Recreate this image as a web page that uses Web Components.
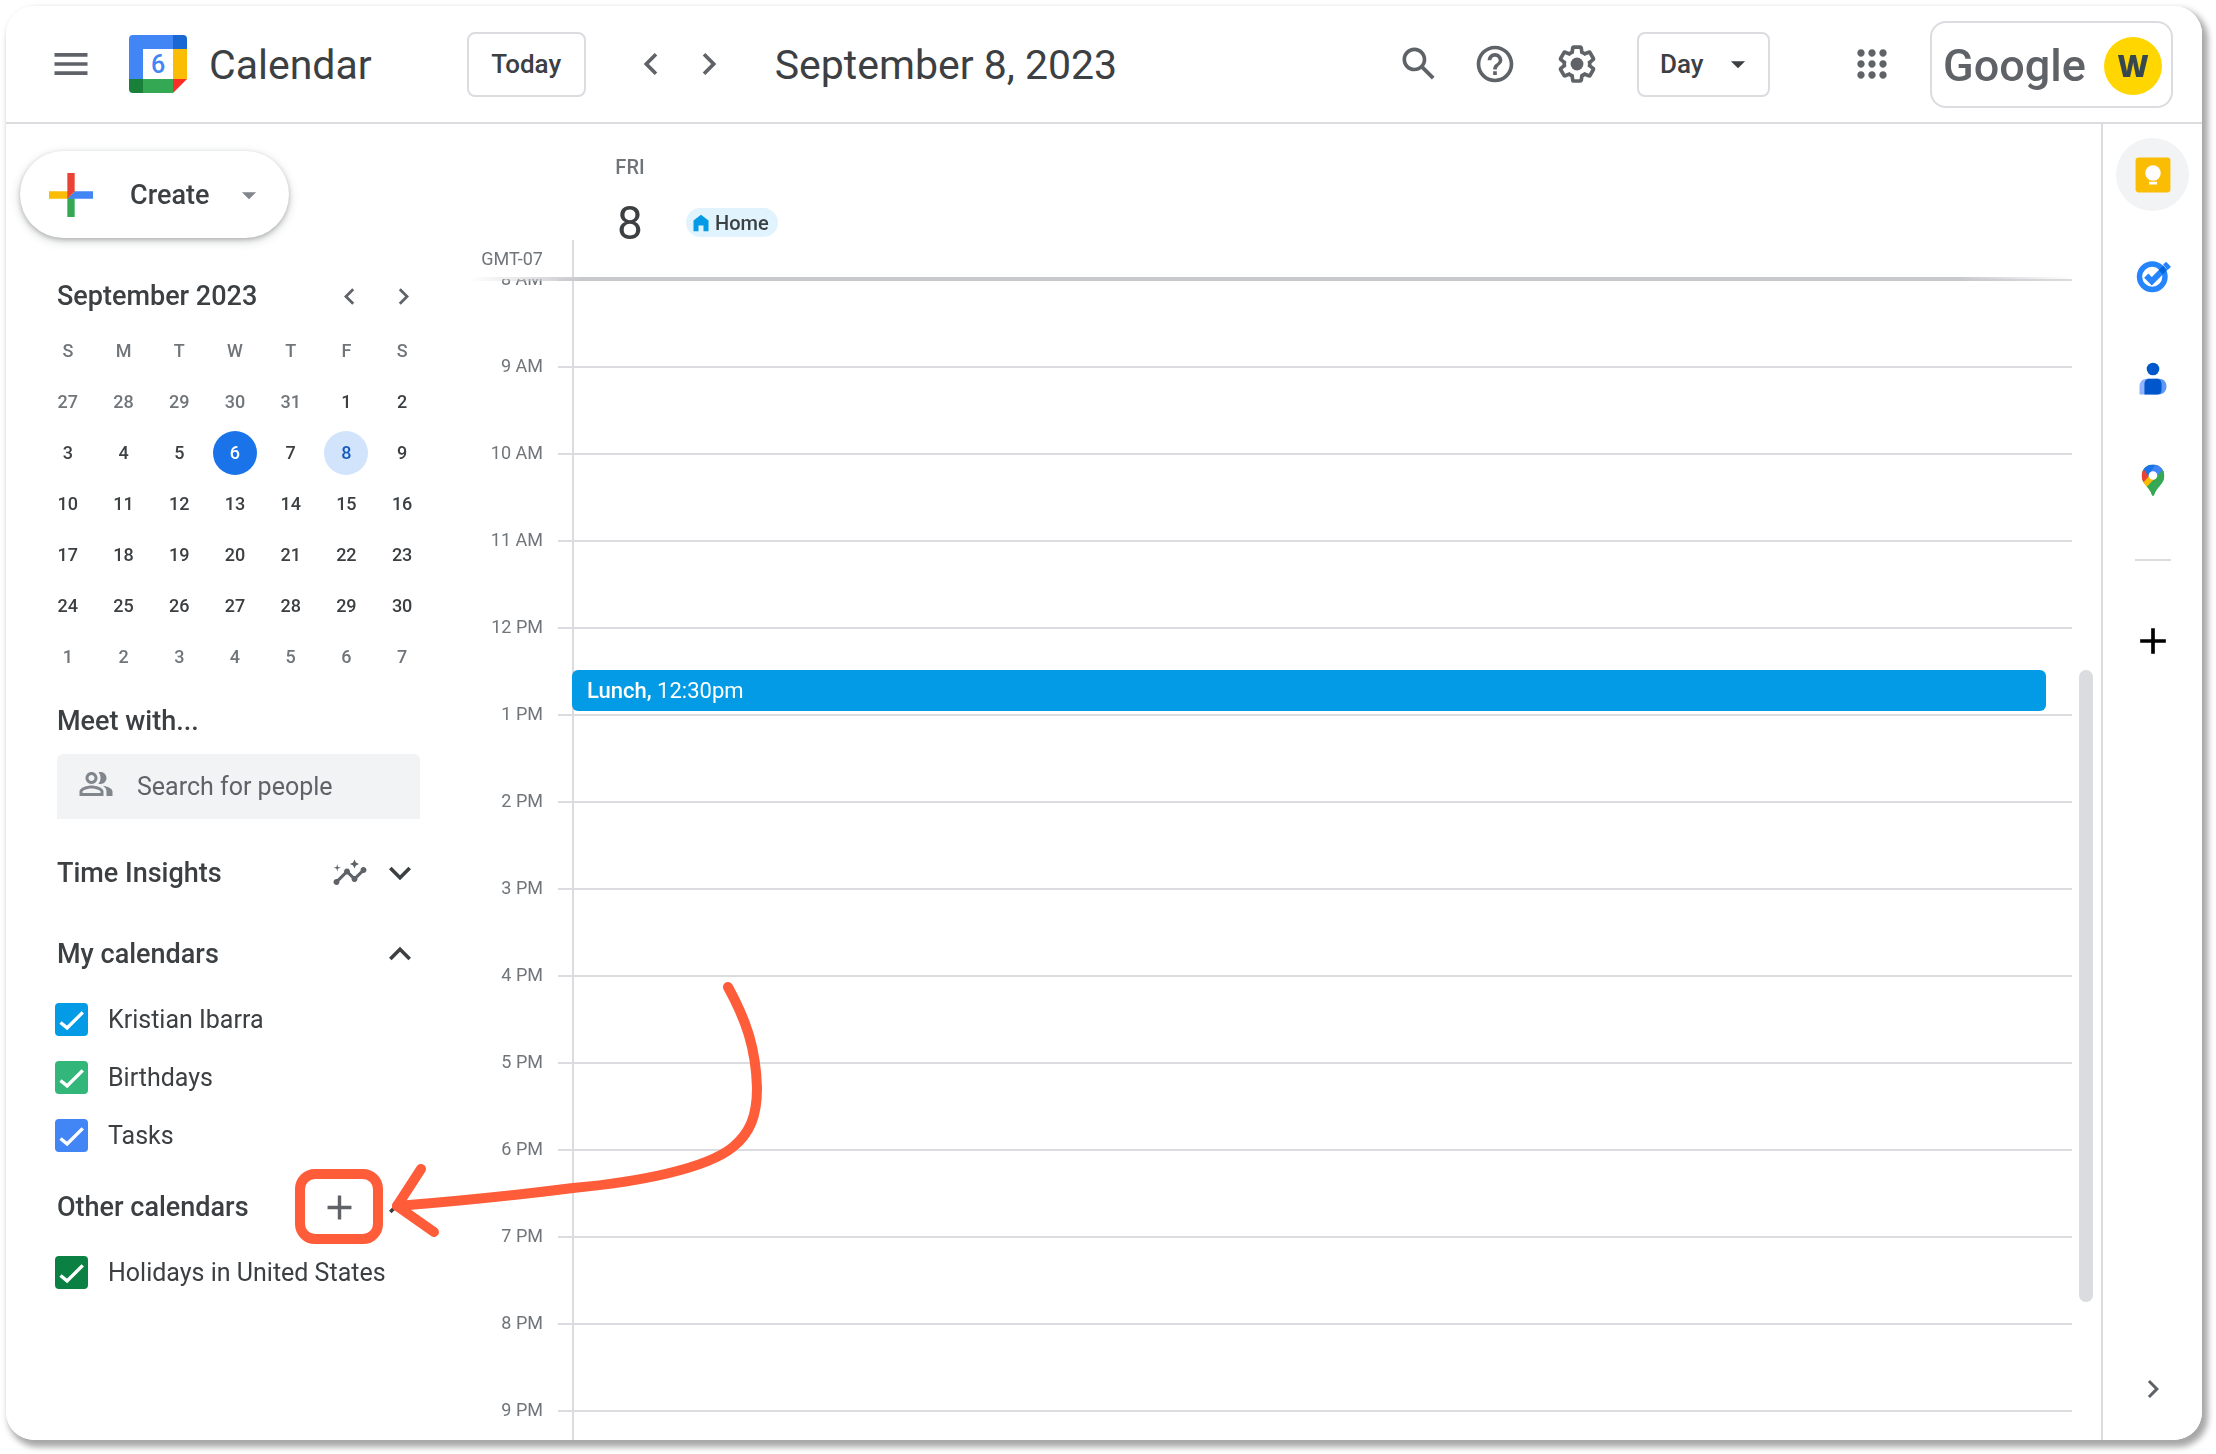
<!DOCTYPE html>
<html lang="en">
<head>
<meta charset="utf-8">
<title>Calendar - September 8, 2023</title>
<style>
  body {
    margin: 6px 14px 14px 6px;
    background: #fff;
    color: #3c4043;
    font-family: Roboto, "Liberation Sans", sans-serif;
  }
</style>
</head>
<body>

<cal-app>
  <cal-topbar slot="top"></cal-topbar>

  <cal-sidebar slot="side">
    <create-button>Create</create-button>
    <mini-month></mini-month>
    <people-search>Meet with...</people-search>
    <cal-section heading="Time Insights" arrow="down">
      <cal-icon slot="tool" name="insights" size="36"></cal-icon>
    </cal-section>
    <cal-section heading="My calendars" arrow="up">
      <cal-check color="#039be5">Kristian Ibarra</cal-check>
      <cal-check color="#33b679">Birthdays</cal-check>
      <cal-check color="#4285f4">Tasks</cal-check>
    </cal-section>
    <cal-section heading="Other calendars" arrow="up">
      <add-button slot="tool"></add-button>
      <cal-check color="#0b8043">Holidays in United States</cal-check>
    </cal-section>
  </cal-sidebar>

  <day-view slot="main">
    <day-event slot="12pm"><b>Lunch,</b> 12:30pm</day-event>
  </day-view>

  <side-rail slot="rail"></side-rail>
</cal-app>

<script>
const ICONS = {
  menu: '<path d="M3 18h18v-2H3v2zm0-5h18v-2H3v2zm0-7v2h18V6H3z"/>',
  left: '<path d="M15.41 7.41L14 6l-6 6 6 6 1.41-1.41L10.83 12z"/>',
  right: '<path d="M10 6L8.59 7.41 13.17 12l-4.58 4.59L10 18l6-6z"/>',
  up: '<path d="M12 8l-6 6 1.41 1.41L12 10.83l4.59 4.58L18 14z"/>',
  down: '<path d="M16.59 8.59L12 13.17 7.41 8.59 6 10l6 6 6-6z"/>',
  drop: '<path d="M7 10l5 5 5-5z"/>',
  plus: '<path d="M19 13h-6v6h-2v-6H5v-2h6V5h2v6h6v2z"/>',
  search: '<path d="M20.49 19l-5.73-5.73C15.53 12.2 16 10.91 16 9.5 16 5.91 13.09 3 9.5 3S3 5.91 3 9.5 5.91 16 9.5 16c1.41 0 2.7-.47 3.77-1.24L19 20.49 20.49 19zM5 9.5C5 7.01 7.01 5 9.5 5S14 7.01 14 9.5 11.99 14 9.5 14 5 11.99 5 9.5z"/>',
  help: '<path d="M11 18h2v-2h-2v2zm1-16C6.48 2 2 6.48 2 12s4.48 10 10 10 10-4.48 10-10S17.52 2 12 2zm0 18c-4.41 0-8-3.59-8-8s3.59-8 8-8 8 3.59 8 8-3.59 8-8 8zm0-14c-2.21 0-4 1.79-4 4h2c0-1.1.9-2 2-2s2 .9 2 2c0 2-3 1.75-3 5h2c0-2.25 3-2.5 3-5 0-2.21-1.79-4-4-4z"/>',
  settings: '<path d="M13.85 22.25h-3.7c-.74 0-1.36-.54-1.45-1.27l-.27-1.89c-.27-.14-.53-.29-.79-.46l-1.8.72c-.7.26-1.47-.03-1.81-.65L2.2 15.53c-.35-.66-.2-1.44.36-1.88l1.53-1.19c-.01-.15-.02-.3-.02-.46 0-.15.01-.31.02-.46l-1.52-1.19c-.59-.45-.74-1.26-.37-1.88l1.85-3.19c.34-.62 1.11-.9 1.79-.63l1.81.73c.26-.17.52-.32.78-.46l.27-1.91c.09-.7.71-1.25 1.44-1.25h3.7c.74 0 1.36.54 1.45 1.27l.27 1.89c.27.14.53.29.79.46l1.8-.72c.71-.26 1.48.03 1.82.65l1.84 3.18c.36.66.2 1.44-.36 1.88l-1.52 1.19c.01.15.02.3.02.46s-.01.31-.02.46l1.52 1.19c.56.45.72 1.23.37 1.86l-1.86 3.22c-.34.62-1.11.9-1.8.63l-1.8-.72c-.26.17-.52.32-.78.46l-.27 1.91c-.1.68-.72 1.22-1.46 1.22zm-3.23-2h2.76l.37-2.55.53-.22c.44-.18.88-.44 1.34-.78l.45-.34 2.38.96 1.38-2.4-2.03-1.58.07-.56c.03-.26.06-.51.06-.78s-.03-.53-.06-.78l-.07-.56 2.03-1.58-1.39-2.4-2.39.96-.45-.35c-.42-.32-.87-.58-1.33-.77l-.52-.22-.37-2.55h-2.76l-.37 2.55-.53.21c-.44.19-.88.44-1.34.79l-.45.33-2.38-.95-1.39 2.39 2.03 1.58-.07.56a7 7 0 0 0-.06.79c0 .26.02.53.06.78l.07.56-2.03 1.58 1.38 2.4 2.39-.96.45.35c.43.33.86.58 1.33.77l.53.22.38 2.55z"/><circle cx="12" cy="12" r="3.5"/>',
  apps: '<path d="M6 8c1.1 0 2-.9 2-2s-.9-2-2-2-2 .9-2 2 .9 2 2 2zm6 12c1.1 0 2-.9 2-2s-.9-2-2-2-2 .9-2 2 .9 2 2 2zm-6 0c1.1 0 2-.9 2-2s-.9-2-2-2-2 .9-2 2 .9 2 2 2zm0-6c1.1 0 2-.9 2-2s-.9-2-2-2-2 .9-2 2 .9 2 2 2zm6 0c1.1 0 2-.9 2-2s-.9-2-2-2-2 .9-2 2 .9 2 2 2zm4-8c0 1.1.9 2 2 2s2-.9 2-2-.9-2-2-2-2 .9-2 2zm-4 2c1.1 0 2-.9 2-2s-.9-2-2-2-2 .9-2 2 .9 2 2 2zm6 6c1.1 0 2-.9 2-2s-.9-2-2-2-2 .9-2 2 .9 2 2 2zm0 6c1.1 0 2-.9 2-2s-.9-2-2-2-2 .9-2 2 .9 2 2 2z"/>',
  people: '<path d="M16.67 13.13C18.04 14.06 19 15.32 19 17v3h4v-3c0-2.18-3.57-3.47-6.33-3.87zM15 12c2.21 0 4-1.79 4-4s-1.79-4-4-4c-.47 0-.91.1-1.33.24C14.5 5.27 15 6.58 15 8s-.5 2.73-1.33 3.76c.42.14.86.24 1.33.24zM9 12c2.21 0 4-1.79 4-4s-1.79-4-4-4-4 1.79-4 4 1.79 4 4 4zm0-6c1.1 0 2 .9 2 2s-.9 2-2 2-2-.9-2-2 .9-2 2-2zM9 13c-2.67 0-8 1.34-8 4v3h16v-3c0-2.66-5.33-4-8-4zm6 5H3v-.99C3.2 16.29 6.3 15 9 15s5.8 1.29 6 2v1z"/>',
  insights: '<path d="M21 8c-1.45 0-2.26 1.44-1.93 2.51l-3.55 3.56c-.3-.09-.74-.09-1.04 0l-2.55-2.55C12.27 10.45 11.46 9 10 9c-1.45 0-2.27 1.44-1.93 2.52l-4.56 4.55C2.44 15.74 1 16.55 1 18c0 1.1.9 2 2 2 1.45 0 2.26-1.44 1.93-2.51l4.55-4.56c.3.09.74.09 1.04 0l2.55 2.55C12.73 16.55 13.54 18 15 18c1.45 0 2.27-1.44 1.93-2.52l3.56-3.55c1.07.33 2.51-.48 2.51-1.93 0-1.1-.9-2-2-2zM15 9l.94-2.07L18 6l-2.06-.93L15 3l-.92 2.07L12 6l2.08.93zM3.5 11L4 9l2-.5L4 8l-.5-2L3 8l-2 .5L3 9z"/>',
  home: '<path d="M12 2L3 9v13h6v-7h6v7h6V9z"/>',
  tick: '<path d="M4 14.2l4.8 3.9L20.2 6.8" fill="none" stroke="#fff" stroke-width="2.5"/>',
  keep: '<rect x="1" y="1" width="22" height="22" rx="2" fill="#fbbc04"/><circle cx="12" cy="10.800" r="4.900" fill="#fff"/><path fill="#fff" d="M9.500 13.500h5v1.600h-5zM9.500 16.300h5v1.700h-5z"/>',
  tasks: '<circle cx="11.500" cy="12.500" r="8.500" fill="none" stroke="#2684fc" stroke-width="3.600"/><path d="M7.500 11.800l3.700 3.700L20.300 6.400" fill="none" stroke="#2684fc" stroke-width="4"/><path d="M15.800 8l2.900-2.900 2.200 3.500-2.400 2.300z" fill="#0066da"/><path d="M19.400 4.400l1.300-1.200 2.600 2.600-1.500 1.500z" fill="#2684fc" stroke="#2684fc" stroke-linejoin="round"/>',
  contacts: '<circle cx="12" cy="6" r="4.200" fill="#0057cc"/><path fill="#91b4fc" d="M8 12.500h4V23H3v-5.300C3 14.500 5 12.500 8 12.500z"/><path fill="#5e97f6" d="M12 12.500h4c3 0 5 2 5 5s-2 5.500-5 5.500h-4z"/><path fill="#0057cc" d="M9.500 12.500h5c2 0 3.200 1.500 3.200 3.500v4c0 2-1.200 3-3.200 3H6.300v-7c0-2 1.200-3.500 3.200-3.500z"/>',
  maps: '<clipPath id="pin"><path d="M12 1c-4.600 0-8 3.500-8 7.900 0 3 1.300 4.900 3.200 7.200 2 2.400 3.300 3.900 4 6.300.3 1 1.300 1 1.600 0 .7-2.400 2-3.900 4-6.300C18.700 13.800 20 11.900 20 8.900 20 4.500 16.600 1 12 1z"/></clipPath><g clip-path="url(#pin)"><path fill="#34a853" d="M0 0h24v24H0z"/><path fill="#fbbc04" d="M2 12.500l5-6 8 5-8 8z"/><path fill="#ea4335" d="M2 2l3 1.500 6 5-5.500 6.500L2 13z"/><path fill="#1a73e8" d="M5 3.800V0h10.500L9 9.500z"/><path fill="#4285f4" d="M14.800 0L20 4v1.200L9.500 17 8.500 8.500z"/><path fill="#fbbc04" d="M5.400 13.500l5-5.700 3 3.700-6.200 6.300z"/><path fill="#34a853" d="M7.500 17L19.300 4.500 24 9 12 24z"/></g><circle cx="12" cy="8.900" r="3" fill="#fff"/>'
};

class CalIcon extends HTMLElement {
  constructor() {
    super();
    this.attachShadow({ mode: 'open' });
  }
  connectedCallback() {
    const size = this.getAttribute('size') || 44;
    this.shadowRoot.innerHTML = `
      <style>
        :host { display: block; flex: none; width: ${size}px; height: ${size}px; }
        svg { display: block; width: 100%; height: 100%; fill: currentColor; }
      </style>
      <svg viewBox="0 0 24 24" aria-hidden="true">${ICONS[this.getAttribute('name')]}</svg>
    `;
  }
}
customElements.define('cal-icon', CalIcon);

// Shared reset for the buttons inside each shadow root
const BUTTON = `
  button {
    font: inherit;
    color: inherit;
    background: none;
    border: 0;
    padding: 0;
    cursor: pointer;
  }
`;

class CalApp extends HTMLElement {
  constructor() {
    super();
    this.attachShadow({ mode: 'open' }).innerHTML = `
      <style>
        :host {
          display: flex;
          flex-direction: column;
          height: calc(100vh - 20px);
          overflow: hidden;
          border-radius: 28px;
          background: #fff;
        }
        .shade {
          position: fixed;
          inset: 6px 14px 14px 6px;
          z-index: -1;
          border-radius: 28px;
          box-shadow: 4px 5px 6px 2px rgba(0, 0, 0, 0.35);
        }
        .body {
          flex: 1;
          display: flex;
          min-height: 0;
        }
        ::slotted(day-view) { flex: 1; min-width: 0; }
      </style>
      <div class="shade"></div>
      <slot name="top"></slot>
      <div class="body">
        <slot name="side"></slot>
        <slot name="main"></slot>
        <slot name="rail"></slot>
      </div>
    `;
  }
}
customElements.define('cal-app', CalApp);

class CalTopbar extends HTMLElement {
  constructor() {
    super();
    this.attachShadow({ mode: 'open' }).innerHTML = `
      <style>
        ${BUTTON}
        :host {
          display: block;
          flex: none;
          border-bottom: 2px solid #dadce0;
        }
        header {
          display: flex;
          align-items: center;
          height: 116px;
          padding: 0 29px 0 43px;
          color: #5f6368;
        }
        .logo { width: 58px; height: 58px; margin: 0 22px 0 36px; }
        h1, h2 {
          margin: 2px 0 0;
          color: #3c4043;
          font-size: 41px;
          font-weight: 400;
          line-height: 48px;
          white-space: nowrap;
        }
        .today, select {
          box-sizing: border-box;
          height: 65px;
          border: 2px solid #dadce0;
          border-radius: 8px;
          background: #fff;
          color: #3c4043;
          font: 500 26px/32px Roboto, sans-serif;
        }
        .today { width: 119px; margin: 0 43px 0 95px; }
        .pager { display: flex; gap: 14px; margin-right: 44px; }
        .tools { display: flex; align-items: center; margin-left: auto; }
        .tools button { margin-right: 38px; }
        .tools button:first-child { margin-right: 32px; }
        .view { display: grid; align-items: center; margin-right: 80px; }
        .view > * { grid-area: 1 / 1; }
        .view cal-icon { justify-self: end; margin-right: 15px; pointer-events: none; color: #3c4043; }
        select { appearance: none; width: 133px; padding: 0 21px; }
        .tools .apps { margin-right: 36px; }
        .account {
          box-sizing: border-box;
          display: flex;
          align-items: center;
          justify-content: space-between;
          width: 243px;
          height: 87px;
          padding: 3px 9px 0 11px;
          border: 2px solid #dadce0;
          border-radius: 16px;
          text-decoration: none;
          color: #5f6368;
        }
        .brand { font-size: 45px; font-weight: 500; line-height: 56px; }
        .avatar {
          width: 58px;
          height: 58px;
          border-radius: 50%;
          background: #ffd600;
          color: #37474f;
          font: 800 30px/58px "Open Sans", sans-serif;
          text-align: center;
        }
      </style>
      <header>
        <button aria-label="Main menu"><cal-icon name="menu"></cal-icon></button>
        <svg class="logo" viewBox="0 0 58 58" aria-hidden="true">
          <path fill="#4285f4" d="M4 0h40v14H14v30H0V4a4 4 0 0 1 4-4z"/>
          <path fill="#1967d2" d="M44 0h10a4 4 0 0 1 4 4v10H44z"/>
          <path fill="#fbbc04" d="M44 14h14v30H44z"/>
          <path fill="#34a853" d="M14 44h30v14H14z"/>
          <path fill="#188038" d="M0 44h14v14H4a4 4 0 0 1-4-4z"/>
          <path fill="#fc2d25" d="M44 44h14L44 58z"/>
          <text x="29" y="38" text-anchor="middle" font-size="25" font-weight="500" fill="#4285f4">6</text>
        </svg>
        <h1>Calendar</h1>
        <button class="today">Today</button>
        <div class="pager">
          <button aria-label="Previous day"><cal-icon name="left"></cal-icon></button>
          <button aria-label="Next day"><cal-icon name="right"></cal-icon></button>
        </div>
        <h2>September 8, 2023</h2>
        <div class="tools">
          <button aria-label="Search"><cal-icon name="search"></cal-icon></button>
          <button aria-label="Support"><cal-icon name="help"></cal-icon></button>
          <button aria-label="Settings"><cal-icon name="settings"></cal-icon></button>
          <div class="view">
            <select aria-label="View"><option>Day</option><option>Week</option><option>Month</option></select>
            <cal-icon name="drop" size="34"></cal-icon>
          </div>
          <button class="apps" aria-label="Google apps"><cal-icon name="apps"></cal-icon></button>
          <a class="account" href="#account">
            <span class="brand">Google</span>
            <span class="avatar">W</span>
          </a>
        </div>
      </header>
    `;
  }
}
customElements.define('cal-topbar', CalTopbar);

class CalSidebar extends HTMLElement {
  constructor() {
    super();
    this.attachShadow({ mode: 'open' }).innerHTML = `
      <style>
        :host {
          box-sizing: border-box;
          display: block;
          flex: none;
          width: 464px;
          padding: 27px 38px 0 34px;
          position: relative;
          z-index: 2;
        }
      </style>
      <slot></slot>
    `;
  }
}
customElements.define('cal-sidebar', CalSidebar);

class CreateButton extends HTMLElement {
  constructor() {
    super();
    this.attachShadow({ mode: 'open' }).innerHTML = `
      <style>
        ${BUTTON}
        :host { display: block; margin-left: -20px; }
        button {
          display: flex;
          align-items: center;
          width: 269px;
          height: 87px;
          padding: 0 23px 0 18px;
          border-radius: 44px;
          background: #fff;
          box-shadow: 0 2px 4px rgba(60, 64, 67, 0.3), 0 3px 8px 2px rgba(60, 64, 67, 0.15);
          font-size: 27px;
          font-weight: 500;
        }
        svg { width: 66px; height: 66px; margin-right: 26px; }
        cal-icon { margin-left: auto; color: #80868b; }
      </style>
      <button>
        <svg viewBox="0 0 36 36" aria-hidden="true">
          <path fill="#34a853" d="M16 16v14h4V20z"/>
          <path fill="#4285f4" d="M30 16H20l-4 4h14z"/>
          <path fill="#fbbc04" d="M6 16v4h10l4-4z"/>
          <path fill="#ea4335" d="M20 16V6h-4v14z"/>
        </svg>
        <slot></slot>
        <cal-icon name="drop" size="34"></cal-icon>
      </button>
    `;
  }
}
customElements.define('create-button', CreateButton);

class MiniMonth extends HTMLElement {
  constructor() {
    super();
    const first = new Date(2023, 7, 27);
    let rows = '';
    for (let w = 0; w < 6; w++) {
      rows += '<tr>';
      for (let d = 0; d < 7; d++) {
        const day = new Date(first);
        day.setDate(first.getDate() + w * 7 + d);
        const n = day.getDate();
        let cls = '';
        if (day.getMonth() !== 8) cls = 'out';
        else if (n === 6) cls = 'today';
        else if (n === 8) cls = 'picked';
        rows += `<td><button class="${cls}">${n}</button></td>`;
      }
      rows += '</tr>';
    }
    this.attachShadow({ mode: 'open' }).innerHTML = `
      <style>
        ${BUTTON}
        :host { display: block; margin: 36px 2px 0 0; }
        .head {
          display: flex;
          align-items: center;
          height: 44px;
          padding: 0 10px 0 17px;
          margin-bottom: 7px;
        }
        h3 { margin: 0 auto 0 0; font-size: 27px; font-weight: 500; }
        .head button { margin-left: 21px; color: #5f6368; }
        table {
          width: 100%;
          table-layout: fixed;
          border-collapse: collapse;
          font-size: 18px;
          font-weight: 500;
          text-align: center;
        }
        th, td { height: 51px; padding: 0; }
        th { font-weight: 500; color: #70757a; }
        td button { width: 44px; height: 44px; border-radius: 50%; }
        .out { color: #70757a; }
        .today { background: #1a73e8; color: #fff; }
        .picked { background: #d2e3fc; color: #185abc; }
      </style>
      <div class="head">
        <h3>September 2023</h3>
        <button aria-label="Previous month"><cal-icon name="left" size="33"></cal-icon></button>
        <button aria-label="Next month"><cal-icon name="right" size="33"></cal-icon></button>
      </div>
      <table>
        <thead><tr>${[...'SMTWTFS'].map(d => `<th>${d}</th>`).join('')}</tr></thead>
        <tbody>${rows}</tbody>
      </table>
    `;
  }
}
customElements.define('mini-month', MiniMonth);

class PeopleSearch extends HTMLElement {
  constructor() {
    super();
    this.attachShadow({ mode: 'open' }).innerHTML = `
      <style>
        :host { display: block; margin: 23px 12px 0 17px; }
        label { display: block; font-size: 27px; font-weight: 500; line-height: 32px; }
        .box {
          display: flex;
          align-items: center;
          height: 65px;
          margin-top: 17px;
          padding-left: 21px;
          gap: 23px;
          border-radius: 6px 6px 0 0;
          background: #f1f3f4;
          color: #80868b;
        }
        input {
          flex: 1;
          min-width: 0;
          border: 0;
          padding: 0;
          outline: 0;
          background: none;
          font: 400 25px/32px Roboto, sans-serif;
        }
        input::placeholder { color: #5f6368; opacity: 1; }
        cal-icon { margin-bottom: 6px; }
      </style>
      <label for="who"><slot></slot></label>
      <div class="box">
        <cal-icon name="people" size="36"></cal-icon>
        <input id="who" type="text" placeholder="Search for people">
      </div>
    `;
  }
}
customElements.define('people-search', PeopleSearch);

class CalSection extends HTMLElement {
  constructor() {
    super();
    this.attachShadow({ mode: 'open' });
  }
  connectedCallback() {
    this.shadowRoot.innerHTML = `
      <style>
        ${BUTTON}
        :host { display: block; margin-top: 32px; }
        :host(:nth-of-type(2)) { margin-top: 37px; }
        :host(:nth-of-type(3)) { margin-top: 21px; }
        .head {
          display: flex;
          align-items: center;
          height: 44px;
          padding: 0 10px 0 17px;
        }
        h3 { margin: 0 auto 0 0; font-size: 27px; font-weight: 500; }
        .list { padding: 14px 0 0 15px; }
        :host([arrow="down"]) .list { padding: 0; }
        ::slotted(cal-icon) { margin-right: 10px; color: #5f6368; }
      </style>
      <div class="head">
        <h3>${this.getAttribute('heading')}</h3>
        <slot name="tool"></slot>
        <button aria-label="Toggle ${this.getAttribute('heading')}">
          <cal-icon name="${this.getAttribute('arrow')}"></cal-icon>
        </button>
      </div>
      <div class="list"><slot></slot></div>
    `;
  }
}
customElements.define('cal-section', CalSection);

class CalCheck extends HTMLElement {
  constructor() {
    super();
    this.attachShadow({ mode: 'open' });
  }
  connectedCallback() {
    this.shadowRoot.innerHTML = `
      <style>
        :host { display: block; }
        label {
          display: flex;
          align-items: center;
          gap: 20px;
          height: 58px;
          font-size: 25px;
          white-space: nowrap;
        }
        .box { display: grid; }
        .box > * { grid-area: 1 / 1; }
        input {
          appearance: none;
          width: 33px;
          height: 33px;
          margin: 0;
          border-radius: 4px;
          border: 3px solid ${this.getAttribute('color')};
        }
        input:checked { background: ${this.getAttribute('color')}; }
        cal-icon { pointer-events: none; }
      </style>
      <label>
        <span class="box">
          <input type="checkbox" checked>
          <cal-icon name="tick" size="33"></cal-icon>
        </span>
        <slot></slot>
      </label>
    `;
  }
}
customElements.define('cal-check', CalCheck);

// "Add other calendars" with the highlight ring and the pointer drawn over the page
class AddButton extends HTMLElement {
  constructor() {
    super();
    this.attachShadow({ mode: 'open' }).innerHTML = `
      <style>
        ${BUTTON}
        :host { display: block; position: relative; z-index: 1; margin-right: 17px; }
        button { display: grid; place-items: center; width: 44px; height: 44px; color: #5f6368; }
        .ring {
          position: absolute;
          inset: -16px -22px -15px;
          border: 10px solid #ff5c39;
          border-radius: 20px;
          pointer-events: none;
        }
        svg {
          position: absolute;
          top: -200px;
          left: 71px;
          width: 380px;
          height: 260px;
          overflow: visible;
          pointer-events: none;
        }
      </style>
      <button aria-label="Add other calendars"><cal-icon name="plus" size="41"></cal-icon></button>
      <div class="ring"></div>
      <svg viewBox="0 0 380 260" fill="none" stroke="#ff5c39" stroke-width="10" stroke-linecap="round" stroke-linejoin="round" aria-hidden="true">
        <path d="M340 2C357 33 368 62 369 103C369 131 362 148 345 162C318 184 250 197 185 203C130 210 70 216 9 221"/>
        <path d="M33 184L9 221L46 247"/>
      </svg>
    `;
  }
}
customElements.define('add-button', AddButton);

class DayView extends HTMLElement {
  constructor() {
    super();
    const hours = ['8 AM', '9 AM', '10 AM', '11 AM', '12 PM', '1 PM', '2 PM', '3 PM', '4 PM', '5 PM', '6 PM', '7 PM', '8 PM', '9 PM'];
    this.attachShadow({ mode: 'open' }).innerHTML = `
      <style>
        :host {
          display: flex;
          flex-direction: column;
          color: #70757a;
        }
        .head {
          display: grid;
          grid-template-columns: 104px 112px 1fr;
          grid-template-rows: 52px 34px 37px;
          padding-top: 30px;
        }
        .weekday { grid-area: 1 / 2; font-size: 20px; font-weight: 500; line-height: 26px; text-align: center; }
        .date { grid-area: 2 / 2; color: #3c4043; font-size: 46px; line-height: 34px; text-align: center; }
        .place {
          grid-area: 2 / 3;
          place-self: start;
          display: flex;
          align-items: center;
          gap: 4px;
          height: 29px;
          margin-top: 2px;
          padding: 0 9px 0 5px;
          border-radius: 15px;
          background: #e1f3fc;
          color: #3c4043;
          font-size: 20px;
          font-weight: 500;
        }
        .place cal-icon { color: #039be5; }
        .zone {
          grid-area: 3 / 1;
          padding-right: 29px;
          border-right: 2px solid #dadce0;
          font-size: 18px;
          line-height: 37px;
          text-align: right;
        }
        .edge {
          height: 4px;
          margin: 0 29px -2px 0;
          position: relative;
          z-index: 1;
          background: linear-gradient(90deg, transparent, #c8c9cc 7%, #c8c9cc 93%, transparent);
        }
        .body {
          flex: 1;
          display: flex;
          min-height: 0;
          overflow: hidden;
        }
        .hours { flex: 1; min-width: 0; }
        .hour {
          display: grid;
          grid-template-columns: 88px 14px 1fr;
          height: 87px;
        }
        .label {
          height: 20px;
          margin-top: -10px;
          padding-right: 15px;
          font-size: 18px;
          line-height: 20px;
          text-align: right;
          white-space: nowrap;
        }
        .tick, .cell { border-top: 2px solid #dadce0; }
        .cell { border-left: 2px solid #dadce0; }
        .scroll {
          display: flex;
          flex-direction: column;
          width: 14px;
          margin: 0 8px 0 7px;
        }
        .scroll::before { content: ""; flex: 391; }
        .scroll::after { content: ""; flex: 138; }
        .thumb { flex: 633; border-radius: 7px; background: #dadce0; }
      </style>
      <div class="head">
        <div class="weekday">FRI</div>
        <div class="date">8</div>
        <div class="place"><cal-icon name="home" size="20"></cal-icon>Home</div>
        <div class="zone">GMT-07</div>
      </div>
      <div class="edge"></div>
      <div class="body">
        <div class="hours">
          ${hours.map(h => `
            <div class="hour">
              <div class="label">${h}</div>
              <div class="tick"></div>
              <div class="cell"><slot name="${h.replace(' ', '').toLowerCase()}"></slot></div>
            </div>`).join('')}
        </div>
        <div class="scroll"><div class="thumb"></div></div>
      </div>
    `;
  }
}
customElements.define('day-view', DayView);

class DayEvent extends HTMLElement {
  constructor() {
    super();
    this.attachShadow({ mode: 'open' }).innerHTML = `
      <style>
        :host {
          display: block;
          margin: 41px 26px 0 -2px;
          padding-left: 15px;
          border-radius: 6px;
          background: #039be5;
          color: #fff;
          font-size: 22px;
          line-height: 41px;
        }
        ::slotted(b) { font-weight: 500; }
      </style>
      <slot></slot>
    `;
  }
}
customElements.define('day-event', DayEvent);

class SideRail extends HTMLElement {
  constructor() {
    super();
    this.attachShadow({ mode: 'open' }).innerHTML = `
      <style>
        ${BUTTON}
        :host {
          box-sizing: border-box;
          display: flex;
          flex-direction: column;
          align-items: center;
          flex: none;
          width: 101px;
          padding: 14px 0 15px;
          border-left: 2px solid #dadce0;
        }
        button {
          display: grid;
          place-items: center;
          width: 73px;
          height: 73px;
          margin-bottom: 29px;
          border-radius: 50%;
        }
        .on { margin-bottom: 28px; background: #f1f3f4; }
        hr { width: 36px; height: 2px; margin: 14px 0 43px; border: 0; background: #dadce0; }
        .add { color: #000; }
        .hide { margin: auto 0 0; color: #5f6368; }
      </style>
      <button class="on" aria-label="Keep"><cal-icon name="keep" size="38"></cal-icon></button>
      <button aria-label="Tasks"><cal-icon name="tasks" size="36"></cal-icon></button>
      <button aria-label="Contacts"><cal-icon name="contacts" size="36"></cal-icon></button>
      <button aria-label="Maps"><cal-icon name="maps" size="34"></cal-icon></button>
      <hr>
      <button class="add" aria-label="Get add-ons"><cal-icon name="plus"></cal-icon></button>
      <button class="hide" aria-label="Hide side panel"><cal-icon name="right" size="36"></cal-icon></button>
    `;
  }
}
customElements.define('side-rail', SideRail);
</script>
</body>
</html>
